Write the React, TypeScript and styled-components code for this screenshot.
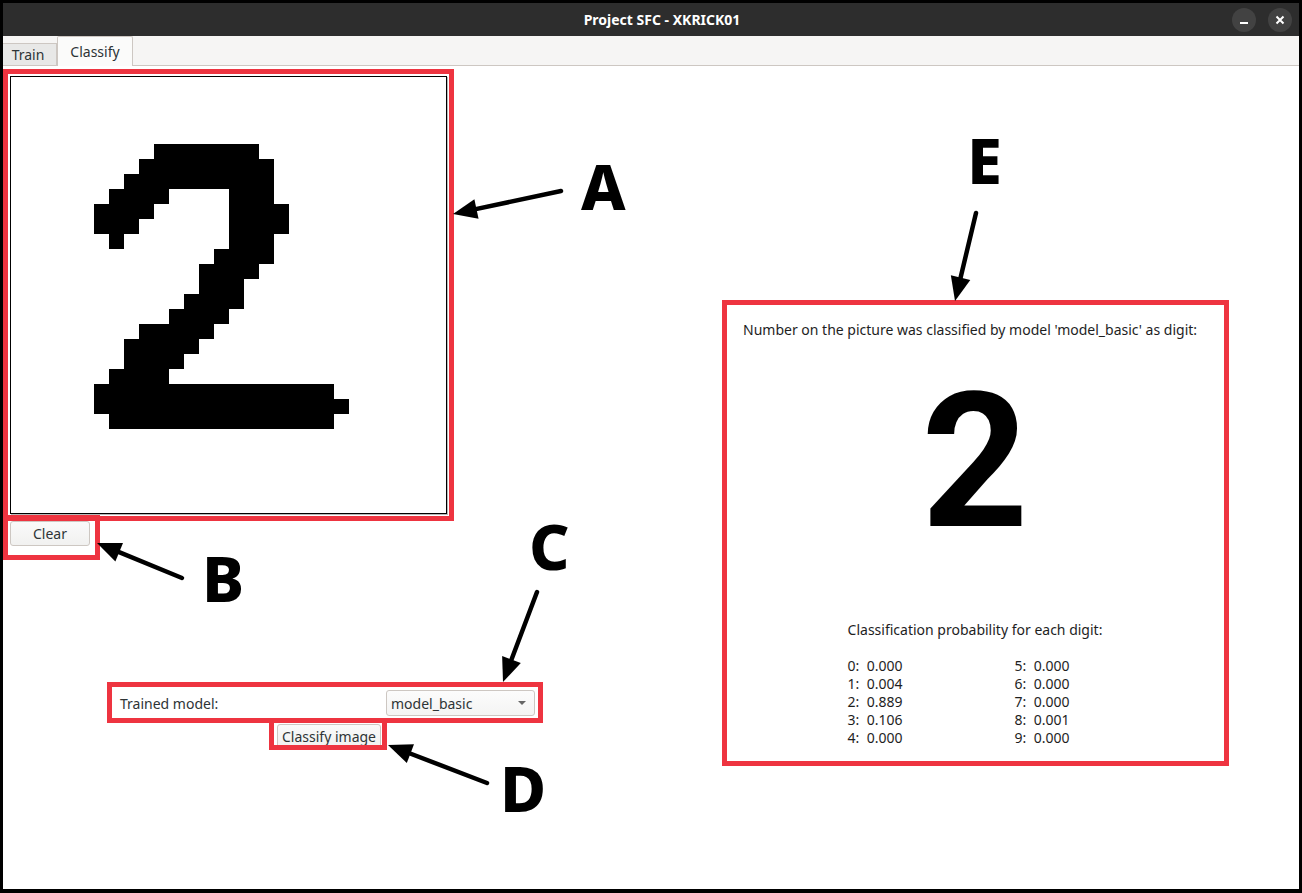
import React from "react";
import styled, { createGlobalStyle } from "styled-components";

const GlobalStyle = createGlobalStyle`
  html, body {
    margin: 0;
    padding: 0;
    background: #000;
  }
  body {
    font-family: "Noto Sans", "DejaVu Sans", sans-serif;
    font-size: 14px;
    color: #2e3436;
  }
`;

const Screen = styled.div`
  position: relative;
  width: 1302px;
  height: 893px;
  box-sizing: border-box;
  padding: 3px 3px 4px 3px;
  background: #000;
  overflow: hidden;
`;

const Window = styled.div`
  display: flex;
  flex-direction: column;
  height: 100%;
  background: #fff;
`;

const TitleBar = styled.div`
  height: 33px;
  flex: none;
  display: flex;
  align-items: center;
  background: #2d2d2d;
  padding-right: 7px;
`;

const Title = styled.div`
  flex: 1;
  padding-left: 89px;
  text-align: center;
  color: #fff;
  font-weight: 700;
  font-size: 14px;
`;

const WinControls = styled.div`
  display: flex;
  gap: 12px;
`;

const WinButton = styled.div`
  width: 24px;
  height: 24px;
  border-radius: 50%;
  background: #424242;
  display: flex;
  align-items: center;
  justify-content: center;
`;

const TabBar = styled.div`
  height: 29px;
  flex: none;
  display: flex;
  align-items: flex-end;
  background: #f6f5f4;
  border-bottom: 1px solid #cdc7c2;
`;

const Tab = styled.div<{ $active?: boolean }>`
  box-sizing: border-box;
  display: flex;
  align-items: center;
  justify-content: center;
  font-size: 14px;
  color: #2e3436;
  border: 1px solid #cdc7c2;
  border-bottom: none;
  height: ${(p) => (p.$active ? "30px" : "22px")};
  width: ${(p) => (p.$active ? "76px" : "54px")};
  margin-bottom: ${(p) => (p.$active ? "-1px" : "0")};
  padding-right: ${(p) => (p.$active ? "0" : "3px")};
  background: ${(p) => (p.$active ? "#fbfbfa" : "#e8e8e7")};
  border-left: ${(p) => (p.$active ? "1px solid #cdc7c2" : "none")};
  border-radius: ${(p) => (p.$active ? "2px 2px 0 0" : "0")};
`;

const Content = styled.div`
  flex: 1;
  display: flex;
`;

const LeftPane = styled.div`
  width: 648px;
  box-sizing: border-box;
  display: flex;
  flex-direction: column;
  align-items: flex-start;
  padding: 10px 0 0 7px;
`;

const Canvas = styled.div`
  width: 437px;
  height: 438px;
  box-sizing: border-box;
  border: 1px solid #000;
  background: #fff;
  box-shadow: 1px 1px 0 #b8b8b8;
`;

const PushButton = styled.button<{ $w: number; $h: number }>`
  width: ${(p) => p.$w}px;
  height: ${(p) => p.$h}px;
  box-sizing: border-box;
  padding: 0;
  border: 1px solid #cdc7c2;
  border-radius: 3px;
  background: linear-gradient(#fafafa, #f1f1f0);
  font-family: "Noto Sans", "DejaVu Sans", sans-serif;
  font-size: 14px;
  color: #2e3436;
`;

const ClearButton = styled(PushButton)`
  margin-top: 7px;
`;

const ModelRow = styled.div`
  margin-top: 144px;
  margin-left: 110px;
  width: 415px;
  height: 26px;
  display: flex;
  align-items: center;
  justify-content: space-between;
`;

const ModelLabel = styled.span`
  color: #2e3436;
`;

const Combo = styled.div`
  width: 149px;
  height: 26px;
  box-sizing: border-box;
  border: 1px solid #cdc7c2;
  border-radius: 3px;
  background: linear-gradient(#fcfcfc, #f4f4f3);
  display: flex;
  align-items: center;
  justify-content: space-between;
  padding: 0 8px 0 4px;
`;

const ComboArrow = styled.span`
  width: 0;
  height: 0;
  border-left: 4px solid transparent;
  border-right: 4px solid transparent;
  border-top: 4px solid #666;
`;

const ClassifyButton = styled(PushButton)`
  margin-top: 8px;
  margin-left: 267px;
`;

const RightPane = styled.div`
  flex: 1;
  box-sizing: border-box;
  padding: 238px 0 0 76px;
`;

const ResultPanel = styled.div`
  width: 496px;
  height: 456px;
  box-sizing: border-box;
  padding: 16px 16px 0;
  display: flex;
  flex-direction: column;
  color: #1e1e1e;
`;

const ResultHeading = styled.div`
  line-height: normal;
`;

const BigDigit = styled.div`
  margin-top: 30px;
  align-self: center;
  font-family: Roboto, "Noto Sans", sans-serif;
  font-size: 187px;
  font-weight: 700;
  line-height: 1;
  color: #000;
`;

const ProbSection = styled.div`
  margin-top: 64px;
  align-self: center;
`;

const ProbGrid = styled.div`
  margin-top: 18px;
  display: grid;
  grid-template-columns: 167px auto;
  grid-auto-flow: column;
  grid-template-rows: repeat(5, 18px);
  line-height: 18px;
`;

const Overlay = styled.div`
  position: absolute;
  inset: 0;
  pointer-events: none;
`;

const RedBox = styled.div<{ $x: number; $y: number; $w: number; $h: number }>`
  position: absolute;
  left: ${(p) => p.$x}px;
  top: ${(p) => p.$y}px;
  width: ${(p) => p.$w}px;
  height: ${(p) => p.$h}px;
  box-sizing: border-box;
  border: 5px solid #ee3440;
`;

const Letter = styled.div<{ $x: number; $y: number }>`
  position: absolute;
  left: ${(p) => p.$x}px;
  top: ${(p) => p.$y}px;
  font-family: "Noto Sans", "DejaVu Sans", sans-serif;
  font-weight: 800;
  font-size: 63px;
  line-height: 1;
  color: #000;
`;

const ArrowLayer = styled.svg`
  position: absolute;
  inset: 0;
`;

const DIGIT: [number, number][][] = [
  [[4, 10]],
  [[3, 11]],
  [[2, 11]],
  [[1, 4], [9, 11]],
  [[0, 3], [9, 12]],
  [[0, 2], [9, 12]],
  [[1, 1], [9, 11]],
  [[8, 11]],
  [[7, 10]],
  [[7, 9]],
  [[6, 9]],
  [[5, 8]],
  [[3, 7]],
  [[2, 6]],
  [[2, 5]],
  [[1, 4]],
  [[0, 15]],
  [[0, 16]],
  [[1, 15]],
];

const PROBS = ["0.000", "0.004", "0.889", "0.106", "0.000", "0.000", "0.000", "0.000", "0.001", "0.000"];

const ARROWS: [number, number, number, number][] = [
  [561, 191, 453, 214],
  [182, 578, 97, 543],
  [537, 592, 503, 682],
  [487, 783, 388, 745],
  [976, 213, 955, 301],
];

function Arrow({ from, to }: { from: [number, number]; to: [number, number] }) {
  const dx = to[0] - from[0];
  const dy = to[1] - from[1];
  const len = Math.hypot(dx, dy);
  const ux = dx / len;
  const uy = dy / len;
  const hl = 24;
  const hw = 10;
  const bx = to[0] - ux * hl;
  const by = to[1] - uy * hl;
  const pts = `${to[0]},${to[1]} ${bx - uy * hw},${by + ux * hw} ${bx + uy * hw},${by - ux * hw}`;
  return (
    <g>
      <line
        x1={from[0]}
        y1={from[1]}
        x2={to[0] - ux * 16}
        y2={to[1] - uy * 16}
        stroke="#000"
        strokeWidth={4.5}
        strokeLinecap="round"
      />
      <polygon points={pts} fill="#000" />
    </g>
  );
}

export default function App() {
  return (
    <>
      <GlobalStyle />
      <Screen>
        <Window>
          <TitleBar>
            <Title>Project SFC - XKRICK01</Title>
            <WinControls>
              <WinButton>
                <svg width="10" height="10" viewBox="0 0 10 10">
                  <rect x="1" y="7" width="8" height="2" fill="#fff" />
                </svg>
              </WinButton>
              <WinButton>
                <svg width="10" height="10" viewBox="0 0 10 10">
                  <path d="M1.5 1.5 L8.5 8.5 M8.5 1.5 L1.5 8.5" stroke="#fff" strokeWidth="2" />
                </svg>
              </WinButton>
            </WinControls>
          </TitleBar>
          <TabBar>
            <Tab>Train</Tab>
            <Tab $active>Classify</Tab>
          </TabBar>
          <Content>
            <LeftPane>
              <Canvas>
                <svg width="435" height="436" shapeRendering="crispEdges">
                  {DIGIT.map((row, r) =>
                    row.map(([a, b]) => (
                      <rect key={`${r}-${a}`} x={83 + a * 15} y={67 + r * 15} width={(b - a + 1) * 15} height={15} fill="#000" />
                    ))
                  )}
                </svg>
              </Canvas>
              <ClearButton $w={80} $h={25}>Clear</ClearButton>
              <ModelRow>
                <ModelLabel>Trained model:</ModelLabel>
                <Combo>
                  <span>model_basic</span>
                  <ComboArrow />
                </Combo>
              </ModelRow>
              <ClassifyButton $w={104} $h={24}>Classify image</ClassifyButton>
            </LeftPane>
            <RightPane>
              <ResultPanel>
                <ResultHeading>Number on the picture was classified by model 'model_basic' as digit:</ResultHeading>
                <BigDigit>2</BigDigit>
                <ProbSection>
                  <div>Classification probability for each digit:</div>
                  <ProbGrid>
                    {PROBS.map((p, i) => (
                      <div key={i}>
                        {i}:&nbsp;&nbsp;{p}
                      </div>
                    ))}
                  </ProbGrid>
                </ProbSection>
              </ResultPanel>
            </RightPane>
          </Content>
        </Window>
        <Overlay>
          <RedBox $x={3} $y={69} $w={451} $h={452} />
          <RedBox $x={3} $y={515} $w={97} $h={45} />
          <RedBox $x={107} $y={682} $w={436} $h={41} />
          <RedBox $x={269} $y={718} $w={118} $h={32} />
          <RedBox $x={722} $y={300} $w={507} $h={466} />
          <ArrowLayer width="1302" height="893">
            {ARROWS.map(([x1, y1, x2, y2], i) => (
              <Arrow key={i} from={[x1, y1]} to={[x2, y2]} />
            ))}
          </ArrowLayer>
          <Letter $x={581} $y={154}>A</Letter>
          <Letter $x={202} $y={546}>B</Letter>
          <Letter $x={529} $y={514}>C</Letter>
          <Letter $x={500} $y={756}>D</Letter>
          <Letter $x={967} $y={128}>E</Letter>
        </Overlay>
      </Screen>
    </>
  );
}
